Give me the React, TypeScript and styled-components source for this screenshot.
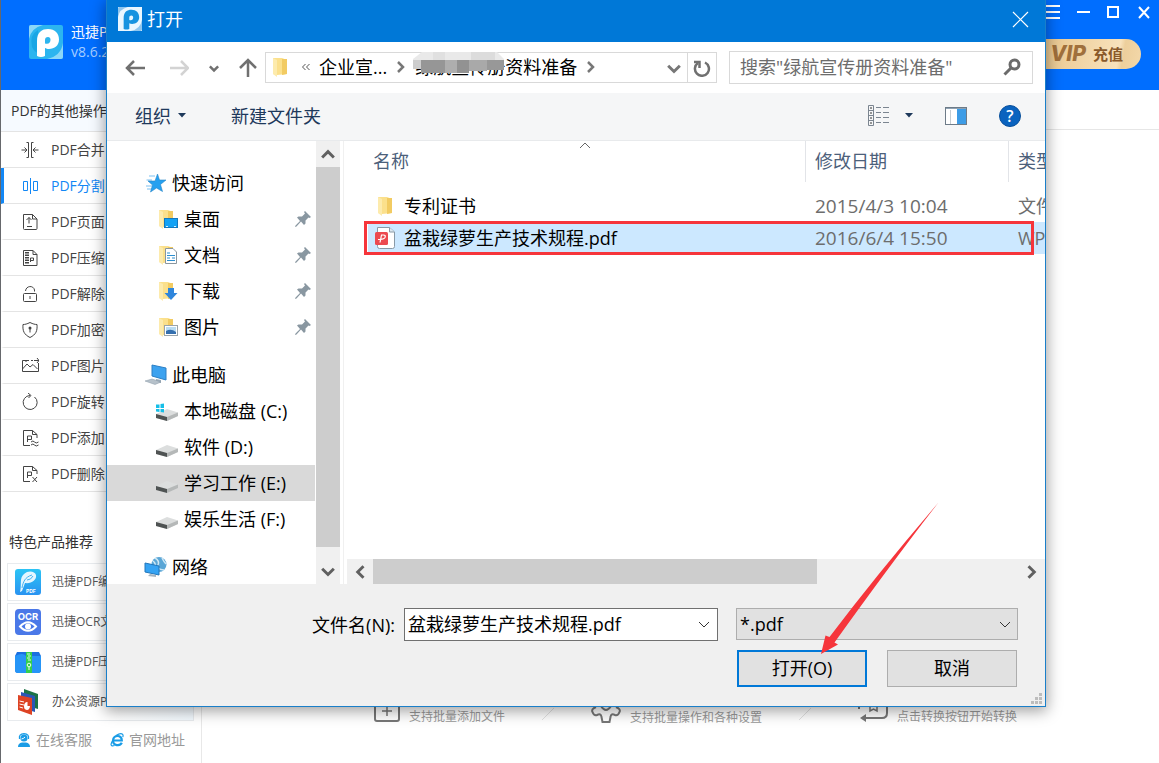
import React from 'react';
import styled, { createGlobalStyle, css } from 'styled-components';

const GlobalStyle = createGlobalStyle`
  *, *::before, *::after { box-sizing: border-box; }
  body { margin: 0; background: #fff; }
  body, button, input, select, table {
    font-family: "Open Sans", "Noto Sans CJK SC", sans-serif;
  }
  button { padding: 0; border: 0; background: none; color: inherit; cursor: pointer; }
  ul { list-style: none; margin: 0; padding: 0; }
  a { color: inherit; text-decoration: none; }
  svg { display: block; flex: none; }
`;

/* ---------- main window ---------- */

const Window = styled.div`
  position: relative;
  display: flex;
  flex-direction: column;
  min-height: 100vh;
  overflow: hidden;
  border-left: 1px solid #66686c;
`;

const Header = styled.header`
  display: flex;
  justify-content: space-between;
  height: 90px;
  background: #006eff;
  color: #fff;
`;

const Brand = styled.div`
  display: flex;
  gap: 8px;
  padding: 22px 0 0 28px;
  font-size: 14px;
  line-height: 20px;
  svg { margin-top: 3px; }
`;

const Version = styled.div`
  color: #a6cdff;
`;

const HeaderSide = styled.div`
  display: flex;
  flex-direction: column;
  align-items: flex-end;
`;

const WindowControls = styled.div`
  display: flex;
  gap: 16px;
  padding: 5px 9px 0 0;
  button { width: 14px; height: 14px; }
`;

const VipButton = styled.button`
  display: flex;
  align-items: center;
  justify-content: flex-end;
  gap: 7px;
  width: 120px;
  height: 30px;
  margin: 20px 18px 0 0;
  padding-right: 18px;
  border-radius: 15px;
  background: linear-gradient(100deg, #e9c78f 20%, #f8e2bc 80%, #edcf9c 84%, #f3d8aa);
  color: #8a5a2b;
  font-size: 15px;
  font-weight: 700;
  line-height: 20px;
  b { font-family: Inter, sans-serif; font-size: 21px; font-weight: 800; font-style: italic; color: #a0703c; }
`;

const Columns = styled.div`
  display: flex;
  flex: 1;
`;

const Sidebar = styled.aside`
  display: flex;
  flex-direction: column;
  width: 201px;
  border-right: 1px solid #e8e8e8;
  color: #333;
`;

const MenuTitle = styled.h2`
  margin: 0;
  padding: 0 10px;
  height: 42px;
  border-bottom: 1px solid #e4e4e4;
  background: #f6faff;
  font-size: 14px;
  font-weight: 400;
  line-height: 42px;
`;

const MenuItem = styled.button<{ $active?: boolean }>`
  display: flex;
  align-items: center;
  gap: 12px;
  width: 100%;
  height: 36px;
  padding-left: 17px;
  border-left: 3px solid ${p => (p.$active ? '#1287f5' : 'transparent')};
  border-bottom: 1px solid #e4e4e4;
  color: ${p => (p.$active ? '#1287f5' : '#444')};
  font-size: 14px;
  line-height: 20px;
`;

const ProductsTitle = styled.h2`
  margin: 39px 0 10px 8px;
  font-size: 14px;
  font-weight: 400;
  line-height: 22px;
`;

const Products = styled.div`
  display: flex;
  flex-direction: column;
  gap: 2px;
  padding: 0 7px 0 6px;
`;

const ProductCard = styled.a`
  display: flex;
  align-items: center;
  gap: 11px;
  height: 38px;
  padding-left: 7px;
  border: 1px solid #e8ebee;
  background: linear-gradient(120deg, #fff 60%, #f3faff);
  color: #555;
  font-size: 12px;
  line-height: 18px;
`;

const SideLinks = styled.div`
  display: flex;
  gap: 18px;
  padding: 9px 0 13px 16px;
  color: #999;
  font-size: 14px;
  line-height: 20px;
  a { display: flex; align-items: center; gap: 5px; }
`;

const Content = styled.main`
  display: flex;
  flex: 1;
  flex-direction: column;
  justify-content: space-between;
`;

const TabStrip = styled.div`
  height: 40px;
  border-bottom: 1px solid #e6e6e6;
`;

const Steps = styled.ol`
  display: flex;
  justify-content: center;
  align-items: center;
  gap: 37px;
  margin: 0;
  padding: 0 0 35px 30px;
  list-style: none;
  color: #999;
  font-size: 12px;
  line-height: 20px;
  li { display: flex; align-items: flex-end; gap: 9px; }
  li > svg { margin-bottom: 4px; }
  li:last-child { margin-left: 10px; }
`;

/* ---------- open dialog ---------- */

const Dialog = styled.section`
  position: absolute;
  inset: 0 113px 56px 105px;
  display: flex;
  flex-direction: column;
  border: 1px solid #1a7fc9;
  border-top: 0;
  background: #fff;
  color: #000;
  font-size: 18px;
  line-height: 24px;
  box-shadow: 0 3px 14px 1px rgba(0, 0, 0, 0.38);
`;

const TitleBar = styled.div`
  display: flex;
  align-items: center;
  gap: 5px;
  height: 42px;
  padding: 0 16px 4px 11px;
  background: #0078d7;
  color: #fff;
  h1 { flex: 1; margin: 0; font-size: 18px; font-weight: 400; }
`;

const NavBar = styled.div`
  display: flex;
  align-items: center;
  height: 51px;
  padding: 0 12px 0 18px;
`;

const NavButtons = styled.div`
  display: flex;
  align-items: center;
  gap: 20px;
  margin-right: 8px;
`;

const AddressBar = styled.div`
  display: flex;
  flex: 1;
  align-items: center;
  height: 31px;
  padding-left: 6px;
  border: 1px solid #d9d9d9;
  white-space: nowrap;
`;

const Crumbs = styled.div`
  display: flex;
  flex: 1;
  align-items: center;
  gap: 8px;
  margin-left: 9px;
  padding-bottom: 2px;
`;

const Crumb = styled.span`
  position: relative;
`;

const Mosaic = styled.svg`
  position: absolute;
  left: -2px;
  top: -3px;
`;

const AddressToggle = styled.button`
  width: 26px;
  display: flex;
  justify-content: center;
`;

const RefreshButton = styled.button`
  display: flex;
  align-items: center;
  justify-content: center;
  width: 29px;
  height: 29px;
  border-left: 1px solid #d9d9d9;
`;

const SearchBox = styled.label`
  display: flex;
  align-items: center;
  width: 304px;
  height: 33px;
  margin-left: 12px;
  padding: 0 11px 2px 10px;
  border: 1px solid #d9d9d9;
  input {
    flex: 1;
    min-width: 0;
    padding: 0;
    border: 0;
    outline: 0;
    font-size: 18px;
    line-height: 24px;
  }
  input::placeholder { color: #6d6d6d; opacity: 1; }
`;

const Toolbar = styled.div`
  display: flex;
  align-items: center;
  height: 48px;
  padding: 0 24px 2px 28px;
  border-bottom: 1px solid #e8eaec;
  background: #f5f6f7;
  color: #1e395b;
  button { display: flex; align-items: center; font-size: 18px; line-height: 24px; }
`;

const OrganizeButton = styled.button`
  gap: 7px;
  margin-right: 45px;
`;

const ToolbarRight = styled.div`
  display: flex;
  align-items: center;
  margin-left: auto;
  gap: 32px;
`;

const ViewButton = styled.button`
  gap: 15px;
`;

const Body = styled.div`
  display: flex;
  flex: 1;
  min-height: 0;
`;

const Tree = styled.nav`
  width: 208px;
  padding-top: 24px;
  overflow: hidden;
`;

const TreeGroup = styled.ul`
  margin-bottom: 12px;
`;

const TreeItem = styled.a<{ $root?: boolean; $selected?: boolean }>`
  display: flex;
  align-items: center;
  gap: 5px;
  height: 36px;
  padding: 0 4px 0 ${p => (p.$root ? 37 : 48)}px;
  background: ${p => (p.$selected ? '#d9d9d9' : 'transparent')};
  white-space: nowrap;
  ${p => p.$root && css`gap: 4px;`}
  span { flex: 1; }
`;

const VScroll = styled.div`
  display: flex;
  flex-direction: column;
  width: 24px;
  margin: 0 1px;
  background: #f0f0f0;
  button { display: flex; align-items: center; justify-content: center; height: 26px; }
  button:last-child { height: 37px; padding-top: 11px; }
`;

const HScroll = styled.div`
  display: flex;
  height: 25px;
  margin-left: 3px;
  background: #f0f0f0;
  button { display: flex; align-items: center; justify-content: center; width: 26px; }
`;

const Thumb = styled.div<{ $grow: number }>`
  flex: ${p => p.$grow};
  background: #cdcdcd;
`;

const Track = styled.div<{ $grow: number }>`
  flex: ${p => p.$grow};
`;

const FilePane = styled.div`
  display: flex;
  flex: 1;
  flex-direction: column;
  min-width: 0;
  margin-left: 2px;
  border-left: 1px solid #f0f0f0;
`;

const FileArea = styled.div`
  position: relative;
  flex: 1;
  padding-left: 24px;
  overflow: hidden;
`;

const FileTable = styled.table`
  width: 100%;
  border-collapse: collapse;
  table-layout: fixed;
  font-size: 18px;
  line-height: 24px;
  th { height: 49px; padding: 0; font-weight: 400; text-align: left; vertical-align: top; color: #4c607a; }
  td { height: 32px; padding: 0 0 0 10px; color: #6d6d6d; white-space: nowrap; overflow: hidden; }
  td:first-child { padding-left: 6px; color: #000; }
`;

const HeadCell = styled.div<{ $first?: boolean }>`
  height: 41px;
  padding: 8px 0 0 ${p => (p.$first ? 5 : 9)}px;
  border-left: ${p => (p.$first ? '0' : '1px solid #e2e4e8')};
  white-space: nowrap;
  overflow: hidden;
`;

const FileRow = styled.tr<{ $selected?: boolean }>`
  background: ${p => (p.$selected ? '#cce8ff' : 'transparent')};
`;

const FileName = styled.div`
  display: flex;
  align-items: center;
  gap: 8px;
`;

const DateText = styled.time`
  font-size: 19px;
`;

const SortMark = styled.svg`
  position: absolute;
  top: 1px;
  left: 235px;
`;

const Highlight = styled.div`
  position: absolute;
  top: 80px;
  left: 20px;
  right: 11px;
  height: 34px;
  border: 3px solid #f6353b;
  pointer-events: none;
`;

const Footer = styled.form`
  position: relative;
  display: grid;
  grid-template-columns: 297px 1fr 282px;
  gap: 9px 0;
  align-items: center;
  padding: 24px 27px 19px 0;
  background: #f0f0f0;
  > label { padding-right: 9px; text-align: right; }
`;

const Combo = styled.div`
  display: flex;
  align-items: center;
  height: 33px;
  margin-right: 18px;
  padding: 0 7px 1px 3px;
  border: 1px solid #707070;
  background: #fff;
  input {
    flex: 1;
    min-width: 0;
    padding: 0;
    border: 0;
    outline: 0;
    font-size: 18px;
    line-height: 24px;
  }
`;

const SelectWrap = styled.div`
  position: relative;
  padding-bottom: 1px;
  select {
    display: block;
    width: 100%;
    height: 32px;
    padding: 0 30px 1px 3px;
    border: 1px solid #adadad;
    border-radius: 0;
    background: #e1e1e1;
    color: #000;
    font-size: 18px;
    appearance: none;
  }
  svg { position: absolute; right: 7px; top: 10px; pointer-events: none; }
`;

const Actions = styled.div`
  grid-column: 3;
  display: grid;
  grid-template-columns: 1fr 1fr;
  gap: 20px;
  padding: 0 1px;
`;

const ActionButton = styled.button<{ $primary?: boolean }>`
  && {
    height: 37px;
    padding-bottom: 1px;
    border: ${p => (p.$primary ? '2px solid #0078d7' : '1px solid #adadad')};
    background: #e1e1e1;
    font-size: 18px;
    line-height: 24px;
  }
`;

const Pointer = styled.svg`
  position: absolute;
  right: 105px;
  bottom: 50px;
  pointer-events: none;
`;

const Grip = styled.svg`
  position: absolute;
  right: 3px;
  bottom: 1px;
`;

/* ---------- icons ---------- */

const AppLogo = ({ size, light }: { size: number; light?: boolean }) => (
  <svg width={size} height={size} viewBox="0 0 34 34">
    <rect width="34" height="34" rx={light ? 0 : 2} fill={light ? '#eaf7ff' : '#2cb5ef'} />
    <path d="M0 14Q2 3 14 0H2Q0 0 0 2Z" fill={light ? '#8fc6ee' : '#8bd8f8'} />
    <path d="M34 18Q32 31 18 34H32Q34 34 34 32Z" fill={light ? '#8fc6ee' : '#8bd8f8'} />
    <path d="M3 22Q0 10 9 5L10 28Q6 28 3 22Z" fill="#0d9ddd" opacity={light ? 0 : 0.6} />
    <path
      d="M8 31V16C8 7 13 4 19 4C26 4 30 8.500 30 14.500C30 20.500 25.500 24 20 24C18.500 24 17 23.500 16 23V31Q12 33 8 31ZM16 15V18.500C20 19.500 21.500 17.500 21.500 14.800C21.500 13 20.500 12 19 12C17 12 16 13 16 15Z"
      fill={light ? '#1793e0' : '#fff'}
      fillRule="evenodd"
    />
  </svg>
);

const Line = ({ w = 18, h = 18, s = 1, children }: { w?: number; h?: number; s?: number; children: React.ReactNode }) => (
  <svg width={w} height={h} viewBox={`0 0 ${w} ${h}`} fill="none" stroke="currentColor" strokeWidth={s}>
    {children}
  </svg>
);

const menu: { label: string; active?: boolean; icon: React.ReactNode }[] = [
  { label: 'PDF合并', icon: <><path d="M5.500 1.500H7.500V16.500H5.500M12.500 1.500H10.500V16.500H12.500M0.500 9H5.500M3.500 6.500 6 9 3.500 11.500M17.500 9H12.500M14.500 6.500 12 9 14.500 11.500" /></> },
  { label: 'PDF分割', active: true, icon: <><path d="M2.500 4.500H6.500V13.500H2.500ZM12.500 4.500H16.500V13.500H12.500ZM9.500 1V17" /></> },
  { label: 'PDF页面', icon: <><path d="M2.500 1.500H11.500L16 6V15.500Q16 16.500 15 16.500H3.500Q2.500 16.500 2.500 15.500ZM11.500 1.500V6H16M8 10.500V4.500M5.500 7 8 4.500 10.500 7M6 13.500H11" /></> },
  { label: 'PDF压缩', icon: <><path d="M2.500 1.500H12L16 5.500V16.500H2.500ZM12 1.500V5.500H16M9.500 13V9H12.500V11.500H9.500" /><path d="M5 3V15M7 3V15" strokeWidth="2" strokeDasharray="1.500 1" /></> },
  { label: 'PDF解除', icon: <><rect x="2.500" y="8.500" width="13" height="8" rx="1" /><path d="M4.500 6C5 .5 12.500 0 13.500 5V6.500M9 11V14" /></> },
  { label: 'PDF加密', icon: <><path d="M9 1.500C6 3 4 3.500 2 3.500C1.500 10 3 13.500 9 16.500C15 13.500 16.500 10 16 3.500C14 3.500 12 3 9 1.500ZM9 8V11.500" /><circle cx="9" cy="7" r="1.500" fill="currentColor" stroke="none" /></> },
  { label: 'PDF图片', icon: <><path d="M8 3.500H1.500V14.500H17.500V6M10 3.500H12M1.500 12 6 7 9 10 12 7.500 16.500 12M13 3.500H18M16 1 18 3.500 16 6M5 3V5" /></> },
  { label: 'PDF旋转', icon: <><path d="M9 2.500A7 7 0 1 0 13.500 4M7 0 10 2.500 7.500 5" /></> },
  { label: 'PDF添加', icon: <><path d="M16 9V5.500L11.500 1.500H2.500V16.500H9M11.500 1.500V5.500H16M6.500 13V7H10.500V10.500H6.500M10 13Q12 11 13.500 13T17.500 13M10 16Q12 14 13.500 16T17.500 16" /></> },
  { label: 'PDF删除', icon: <><path d="M16 9V5.500L11.500 1.500H2.500V16.500H9M11.500 1.500V5.500H16M6.500 13V7H10.500V10.500H6.500M11.500 12 16 17M16 12 11.500 17" /></> },
];

const EditorIcon = () => (
  <svg width="26" height="26" viewBox="0 0 26 26">
    <defs>
      <linearGradient id="editor" x2="0" y2="1"><stop stopColor="#2cc4f5" /><stop offset="1" stopColor="#2993f1" /></linearGradient>
    </defs>
    <rect width="26" height="26" rx="3" fill="url(#editor)" />
    <path d="M5 23C7 16 4 9 9 5C13 1 20 2 21 6C22 11 16 15 10 14L7 22Z" fill="#e4f6ff" />
    <path d="M7 19C8 13 10 8 17 6M12 11Q16 11 18 7" stroke="#46b3f0" fill="none" />
    <text x="11" y="23.500" fontSize="5" fontWeight="700" fill="#fff" fontFamily="Inter">PDF</text>
  </svg>
);

const OcrIcon = () => (
  <svg width="26" height="26" viewBox="0 0 26 26">
    <rect width="26" height="26" rx="4" fill="#4a78e8" />
    <text x="13" y="10.500" fontSize="9.500" fontWeight="700" fill="#fff" textAnchor="middle" fontFamily="Inter">OCR</text>
    <path d="M5 17.500Q13 9 21 17.500Q13 26 5 17.500Z" fill="none" stroke="#fff" strokeWidth="2" />
    <circle cx="13" cy="17.500" r="3" fill="#fff" />
  </svg>
);

const ZipIcon = () => (
  <svg width="26" height="26" viewBox="0 0 26 26">
    <path d="M2 3H24L26 7V21Q26 24 23 24H3Q0 24 0 21V7Z" fill="#1b6fe0" />
    <path d="M0 7Q8 3 11 7H26V21Q26 24 23 24H3Q0 24 0 21Z" fill="#2695f7" />
    <rect x="11" y="3" width="6" height="21" fill="#35cf4f" />
    <path d="M12 5H15M13 7H16M12 9H15M13 11H16" stroke="#d7ffdc" />
    <circle cx="14" cy="16" r="1.800" fill="none" stroke="#eaffec" />
    <path d="M14 18V21" stroke="#eaffec" />
  </svg>
);

const OfficeIcon = () => (
  <svg width="26" height="26" viewBox="0 0 26 26">
    <path d="M9 0 23 5V20L9 16Z" fill="#1d7346" />
    <path d="M6 3 20 7V23L6 19Z" fill="#2b57b5" />
    <path d="M3 6 17 9V26L3 21Z" fill="#dd4324" />
    <path d="M4.500 12 9 13M4.500 15 9 16M4.500 18 8 19" stroke="#fff" />
    <path d="M12.500 13A3 4 0 1 0 15 17H12.500Z" fill="#fff" />
  </svg>
);

const AgentIcon = () => (
  <svg width="14" height="14" viewBox="0 0 14 14" fill="#1a9ce6">
    <path d="M1 14Q1 10 5 9.500H9Q13 10 13 14Z" />
    <circle cx="7" cy="5" r="3.600" />
    <path d="M2.500 6Q1.500 1 7 0.700Q12.500 1 11.500 6" fill="none" stroke="#1a9ce6" strokeWidth="1.200" />
    <path d="M4.500 6Q7 5.500 8 4" stroke="#fff" fill="none" />
  </svg>
);

const BrowserIcon = () => (
  <svg width="14" height="14" viewBox="0 0 14 14" fill="none" stroke="#1a9ce6">
    <path d="M3.500 7.500H11.800C12 1.500 3.500 1.500 3 7.500C3 13 10 13.500 11.800 9.800" strokeWidth="2.200" />
    <path d="M6 2.500C11 -.5 14 .5 12.800 4M3 7C0 11 .5 14 4.500 12.500" strokeWidth="1.200" />
  </svg>
);

const folderShape = (
  <>
    <path d="M1 1H10L15 3V17L5 18 1 17Z" fill="#fbe08c" />
    <path d="M10 2H15V17L10 18Z" fill="#f2cb62" />
    <path d="M1 1 5 3V20L1 17Z" fill="#fdebad" />
  </>
);

const Folder = () => <svg width="20" height="21" viewBox="0 0 20 21">{folderShape}</svg>;

const FolderWith = ({ children }: { children: React.ReactNode }) => (
  <svg width="24" height="21" viewBox="-3 0 24 21">{folderShape}{children}</svg>
);

const Desktop = () => (
  <FolderWith>
    <rect x="6.500" y="9.500" width="13" height="9" fill="#13a2f5" stroke="#1478bd" />
    <path d="M8 17.500H10M16 17.500H18" stroke="#d9f0ff" />
  </FolderWith>
);
const Docs = () => (
  <FolderWith>
    <path d="M7.500 3.500H15L18.500 7V18.500H7.500Z" fill="#fff" stroke="#8a969e" />
    <path d="M9 8H12M9 10.500H17M9 13H12M14 13H17M9 15.500H17" stroke="#2c8fd0" />
  </FolderWith>
);
const Downloads = () => (
  <FolderWith><path d="M10 7H16V12H19.500L13 19 6.500 12H10Z" fill="#2f86dc" /></FolderWith>
);
const Pictures = () => (
  <FolderWith>
    <rect x="6.500" y="8.500" width="13" height="10" fill="#fff" stroke="#9aa4aa" />
    <rect x="8" y="10" width="10" height="7" fill="#b9dcf3" />
    <path d="M8 14Q13 11 18 15V17H8Z" fill="#356fae" />
  </FolderWith>
);

const Star = () => (
  <svg width="24" height="20" viewBox="0 0 24 20">
    <path d="M5 3H11M2.500 7H8M2 13H8M3 16H8" stroke="#7cc1f1" />
    <path d="M13.500 1 15.500 7 22 7 16.500 11.500 18.500 18.500 12.500 15 6.500 19 8.500 12 4 8H11Z" fill="#24a0f0" stroke="#2a86c8" strokeWidth=".6" />
  </svg>
);
const Computer = () => (
  <svg width="24" height="22" viewBox="0 0 24 22">
    <path d="M8 1 22 4V16L8 12Z" fill="#3ca2ef" stroke="#2c7fc4" />
    <path d="M12 15V18L17 19V16Z" fill="#9cabb8" />
    <path d="M1 17 8 15 17 18 11 20.500Z" fill="#b6c1ca" stroke="#8797a4" strokeWidth=".5" />
  </svg>
);
const Network = () => (
  <svg width="24" height="22" viewBox="0 0 24 22">
    <circle cx="15" cy="8.500" r="7.500" fill="#5aa6d6" />
    <path d="M11 2Q16 5 14 9T20 14M18 2Q20 6 22 8M9 5Q13 8 10 12" stroke="#cfe8f5" strokeWidth="1.500" fill="none" />
    <path d="M1 7 15 10V19L1 16Z" fill="#35a3f3" stroke="#2277bb" />
    <path d="M6 18 12 19V21L4 20Z" fill="#a7b4bf" />
  </svg>
);
const Drive = ({ system }: { system?: boolean }) => (
  <svg width="24" height="22" viewBox="0 0 24 22">
    <path d="M1 14 12 9 23 12.500V16L12 21 1 18Z" fill="#dcdede" />
    <path d="M1 14 12 17V21L1 18Z" fill="#4f5353" />
    <path d="M12 17 23 12.500V16L12 21Z" fill="#b5b8b8" />
    {system && <path d="M1 4.500H4.500V8H1ZM5.500 4 9 3.500V8H5.500ZM1 9H4.500V12L1 11.500ZM5.500 9H9V12.500L5.500 12Z" fill="#16bfe8" />}
  </svg>
);
const Pin = () => (
  <svg width="16" height="16" viewBox="0 0 16 16" fill="#8997a1">
    <path d="M10 0 16 6 14.500 7 13.500 6.500 10.500 9.500 10.500 12.500 9 14 6 10.500 1.500 15.500 0 16 .5 14.500 5 10 2 6.500 3.500 5.500 7 5.500 10 2.500 9 1Z" />
  </svg>
);

const PdfFile = () => (
  <svg width="22" height="24" viewBox="0 0 22 24">
    <path d="M3.500 1.500H15.500L20.500 6V20.500Q20.500 22.500 18.500 22.500H5.500Q3.500 22.500 3.500 20.500Z" fill="#fff" stroke="#8899a6" />
    <path d="M15.500 1.500V6H20.500" fill="#dce8f0" stroke="#8899a6" />
    <rect x="1" y="6" width="13" height="13" rx="1.500" fill="#ec4a50" />
    <path d="M6 16.500 7.500 9H9.500Q12 9 11 11.500Q10 13.500 4 13.500" stroke="#fff" strokeWidth="1.200" fill="none" />
  </svg>
);

const Chevron = ({ dir, size = 10, s = 2, color = '#606060' }: { dir: 'up' | 'down' | 'left' | 'right'; size?: number; s?: number; color?: string }) => {
  const d = { up: 'M1 9 6 4 11 9', down: 'M1 4 6 9 11 4', left: 'M9 1 4 6 9 11', right: 'M3 1 8 6 3 11' }[dir];
  return (
    <svg width={size} height={size} viewBox="0 0 12 12" fill="none" stroke={color} strokeWidth={s}>
      <path d={d} />
    </svg>
  );
};

const Caret = () => <svg width="8" height="5" viewBox="0 0 8 5"><path d="M0 0H8L4 4.500Z" fill="#1e395b" /></svg>;

const quickAccess = [
  { label: '桌面', icon: <Desktop /> },
  { label: '文档', icon: <Docs /> },
  { label: '下载', icon: <Downloads /> },
  { label: '图片', icon: <Pictures /> },
];

const drives = [
  { label: '本地磁盘 (C:)', system: true },
  { label: '软件 (D:)' },
  { label: '学习工作 (E:)', selected: true },
  { label: '娱乐生活 (F:)' },
];

const products = [
  { label: '迅捷PDF编', icon: <EditorIcon /> },
  { label: '迅捷OCR文', icon: <OcrIcon /> },
  { label: '迅捷PDF压', icon: <ZipIcon /> },
  { label: '办公资源P', icon: <OfficeIcon /> },
];

const Slash = () => <svg width="12" height="12" viewBox="0 0 12 12" stroke="#e2e2e2"><path d="M0 12 12 0" /></svg>;

function OpenDialog() {
  return (
    <Dialog role="dialog" aria-label="打开">
      <TitleBar>
        <AppLogo size={24} light />
        <h1>打开</h1>
        <button aria-label="关闭">
          <svg width="17" height="17" viewBox="0 0 17 17" stroke="#fff" strokeWidth="1.200"><path d="M1 1 16 16M16 1 1 16" /></svg>
        </button>
      </TitleBar>

      <NavBar>
        <NavButtons>
          <button aria-label="后退"><Line w={20} h={16} s={2.5}><g stroke="#707070"><path d="M20 8H3M9 1 2 8 9 15" /></g></Line></button>
          <button aria-label="前进"><Line w={24} h={16} s={2.5}><g stroke="#d3d3d3"><path d="M5 8H22M16 1 23 8 16 15" /></g></Line></button>
          <button aria-label="最近位置"><Chevron dir="down" s={3} color="#707070" /></button>
          <button aria-label="向上"><Line w={18} h={20} s={2.5}><g stroke="#707070"><path d="M9 19V2M1 10 9 2 17 10" /></g></Line></button>
        </NavButtons>
        <AddressBar>
          <Folder />
          <Crumbs>
            <Line w={10} h={8}><g stroke="#555"><path d="M4.500 1 1.500 4 4.500 7M8.500 1 5.500 4 8.500 7" /></g></Line>
            <Crumb>企业宣...</Crumb>
            <Chevron dir="right" size={12} s={2.5} color="#777" />
            <Crumb>
              绿航宣传册资料准备
              <Mosaic width="92" height="22" viewBox="0 0 92 22">
                <path d="M9 0H84L91 7V12H0V7Z" fill="#e9e9e9" />
                <rect x="20" y="0" width="12" height="9" fill="#e0e0e0" />
                <rect x="58" y="0" width="24" height="9" fill="#dcdcdc" />
                <rect x="0" y="8" width="8" height="9" fill="#cdcdcd" />
                <rect x="8" y="8" width="24" height="13" fill="#969696" />
                <rect x="32" y="8" width="12" height="13" fill="#aeaeae" />
                <rect x="44" y="8" width="12" height="13" fill="#929292" />
                <rect x="56" y="8" width="18" height="11" fill="#a9a9a9" />
                <rect x="74" y="8" width="17" height="10" fill="#989898" />
              </Mosaic>
            </Crumb>
            <Chevron dir="right" size={12} s={2.5} color="#777" />
          </Crumbs>
          <AddressToggle aria-label="以前的位置"><Chevron dir="down" size={14} s={2.5} color="#777" /></AddressToggle>
          <RefreshButton aria-label="刷新">
            <Line s={2.5}><g stroke="#707070"><path d="M5 4A7 7 0 1 0 12 3.500" /><path d="M1 3H6.500V9" /></g></Line>
          </RefreshButton>
        </AddressBar>
        <SearchBox>
          <input type="search" aria-label="搜索" placeholder={'搜索"绿航宣传册资料准备"'} />
          <Line w={18} h={18} s={3}><g stroke="#6b6b6b"><circle cx="11.500" cy="6.500" r="4.500" /><path d="M8 10 1.500 16.500" /></g></Line>
        </SearchBox>
      </NavBar>

      <Toolbar>
        <OrganizeButton>组织 <Caret /></OrganizeButton>
        <button>新建文件夹</button>
        <ToolbarRight>
          <ViewButton aria-label="更改视图">
            <svg width="22" height="22" viewBox="0 0 22 22" fill="none" stroke="#7b8590">
              <path d="M.5 .5H5.500V20.500H.5ZM.5 5.500H5.500M.5 10.500H5.500M.5 15.500H5.500" />
              <path d="M2 3H4M2 8H4M2 13H4M2 18H4" stroke="#333" />
              <path d="M8 2.500H13M15 2.500H21M8 7.500H13M15 7.500H21M8 12.500H13M15 12.500H21M8 17.500H13M15 17.500H21" />
            </svg>
            <Caret />
          </ViewButton>
          <button aria-label="显示预览窗格">
            <svg width="22" height="18" viewBox="0 0 22 18">
              <rect x=".5" y=".5" width="21" height="17" fill="#fff" stroke="#6d7b88" />
              <path d="M1 1.500H21" stroke="#8fa2b3" />
              <path d="M5.500 3V17" stroke="#c5ccd2" />
              <rect x="12" y="2" width="9" height="15" fill="#3d9ce6" />
            </svg>
          </button>
          <button aria-label="获取帮助">
            <svg width="22" height="22" viewBox="0 0 22 22">
              <circle cx="11" cy="11" r="10.500" fill="#0a63bf" stroke="#084f9b" />
              <text x="11" y="17" fontSize="16" fontWeight="600" fill="#fff" textAnchor="middle">?</text>
            </svg>
          </button>
        </ToolbarRight>
      </Toolbar>

      <Body>
        <Tree aria-label="文件夹">
          <TreeGroup>
            <li><TreeItem href="#" $root><Star /><span>快速访问</span></TreeItem></li>
            {quickAccess.map(q => (
              <li key={q.label}><TreeItem href="#">{q.icon}<span>{q.label}</span><Pin /></TreeItem></li>
            ))}
          </TreeGroup>
          <TreeGroup>
            <li><TreeItem href="#" $root><Computer /><span>此电脑</span></TreeItem></li>
            {drives.map(d => (
              <li key={d.label}><TreeItem href="#" $selected={d.selected}><Drive system={d.system} /><span>{d.label}</span></TreeItem></li>
            ))}
          </TreeGroup>
          <TreeGroup>
            <li><TreeItem href="#" $root><Network /><span>网络</span></TreeItem></li>
          </TreeGroup>
        </Tree>
        <VScroll>
          <button aria-label="向上滚动"><Chevron dir="up" size={14} s={2.5} /></button>
          <Thumb $grow={1} />
          <button aria-label="向下滚动"><Chevron dir="down" size={14} s={2.5} /></button>
        </VScroll>

        <FilePane>
          <FileArea>
            <FileTable>
              <colgroup><col /><col style={{ width: 203 }} /><col style={{ width: 37 }} /></colgroup>
              <thead>
                <tr>
                  <th><HeadCell $first>名称</HeadCell></th>
                  <th><HeadCell>修改日期</HeadCell></th>
                  <th><HeadCell>类型</HeadCell></th>
                </tr>
              </thead>
              <tbody>
                <FileRow>
                  <td><FileName><svg width="22" height="21" viewBox="-3 0 22 21">{folderShape}</svg>专利证书</FileName></td>
                  <td><DateText>2015/4/3 10:04</DateText></td>
                  <td>文件</td>
                </FileRow>
                <FileRow $selected>
                  <td><FileName><PdfFile />盆栽绿萝生产技术规程.pdf</FileName></td>
                  <td><DateText>2016/6/4 15:50</DateText></td>
                  <td>WPS</td>
                </FileRow>
              </tbody>
            </FileTable>
            <SortMark width="12" height="7" viewBox="0 0 12 7" fill="none" stroke="#666"><path d="M1 6 6 1 11 6" /></SortMark>
            <Highlight />
          </FileArea>
          <HScroll>
            <button aria-label="向左滚动"><Chevron dir="left" size={14} s={2.5} /></button>
            <Thumb $grow={444} />
            <Track $grow={202} />
            <button aria-label="向右滚动"><Chevron dir="right" size={14} s={2.5} /></button>
          </HScroll>
        </FilePane>
      </Body>

      <Footer onSubmit={e => e.preventDefault()}>
        <label htmlFor="filename">文件名(N):</label>
        <Combo>
          <input id="filename" type="text" defaultValue="盆栽绿萝生产技术规程.pdf" />
          <button type="button" aria-label="文件名列表"><Chevron dir="down" size={12} s={1} color="#333" /></button>
        </Combo>
        <SelectWrap>
          <select aria-label="文件类型"><option>*.pdf</option></select>
          <Chevron dir="down" size={12} s={1} color="#333" />
        </SelectWrap>
        <Actions>
          <ActionButton type="submit" $primary>打开(O)</ActionButton>
          <ActionButton type="button">取消</ActionButton>
        </Actions>
        <Grip width="12" height="12" viewBox="0 0 12 12" fill="#bdbdbd">
          <path d="M9 0H12V3H9ZM5 4H8V7H5ZM9 4H12V7H9ZM1 8H4V11H1ZM5 8H8V11H5ZM9 8H12V11H9Z" />
        </Grip>
        <Pointer width="120" height="154" viewBox="0 0 120 154">
          <path d="M118.500 0.500Q70 63 14.500 140.500L18 142.500 1 152 5.500 133.500 9.500 135Q58 71 118.500 0.500Z" fill="#f6353b" />
        </Pointer>
      </Footer>
    </Dialog>
  );
}

export default function App() {
  return (
    <Window>
      <GlobalStyle />
      <Header>
        <Brand>
          <AppLogo size={34} />
          <div>
            <div>迅捷PDF</div>
            <Version>v8.6.2</Version>
          </div>
        </Brand>
        <HeaderSide>
          <WindowControls>
            <button aria-label="菜单"><Line w={14} h={14} s={2}><path d="M0 1H14M0 7H14M0 13H14" /></Line></button>
            <button aria-label="最小化"><Line w={14} h={14} s={2}><path d="M1 7H14" /></Line></button>
            <button aria-label="最大化"><Line w={14} h={14} s={2}><path d="M2 2H12V12H2Z" /></Line></button>
            <button aria-label="关闭程序"><Line w={14} h={14} s={2}><path d="M3 2 13 13M13 2 3 13" /></Line></button>
          </WindowControls>
          <VipButton><b>VIP</b>充值</VipButton>
        </HeaderSide>
      </Header>

      <Columns>
        <Sidebar>
          <MenuTitle>PDF的其他操作</MenuTitle>
          <ul>
            {menu.map(m => (
              <li key={m.label}><MenuItem $active={m.active}><Line>{m.icon}</Line>{m.label}</MenuItem></li>
            ))}
          </ul>
          <ProductsTitle>特色产品推荐</ProductsTitle>
          <Products>
            {products.map(p => <ProductCard href="#" key={p.label}>{p.icon}{p.label}</ProductCard>)}
          </Products>
          <SideLinks>
            <a href="#"><AgentIcon />在线客服</a>
            <a href="#"><BrowserIcon />官网地址</a>
          </SideLinks>
        </Sidebar>

        <Content>
          <TabStrip />
          <Steps>
            <li>
              <Line w={26} h={22} s={2}><g stroke="#777"><path d="M1 0V18Q1 20 3 20H23Q25 20 25 18V0" /><path d="M13 5V15M8 10H18" strokeWidth="1.500" /></g></Line>
              支持批量添加文件
            </li>
            <Slash />
            <li>
              <Line w={30} h={24} s={2}><g stroke="#777"><path d="M5 7Q0 9 1.500 12Q3 16 6 15Q10 13 10.500 17L11.500 22H18.500L19.500 17Q20 13 24 15Q27 16 28.500 12Q30 9 25 7M10 6Q15 14 20 6" /></g></Line>
              支持批量操作和各种设置
            </li>
            <Slash />
            <li>
              <Line w={30} h={22} s={2}><g stroke="#777"><path d="M1 2V8M5 17H24Q29 17 29 12V4" /><path d="M8 13 2 17 8 21Z" fill="#777" stroke="none" /><path d="M12 5V10L15.500 8 19 10V5" strokeWidth="1.500" /></g></Line>
              点击转换按钮开始转换
            </li>
          </Steps>
        </Content>
      </Columns>

      <OpenDialog />
    </Window>
  );
}
